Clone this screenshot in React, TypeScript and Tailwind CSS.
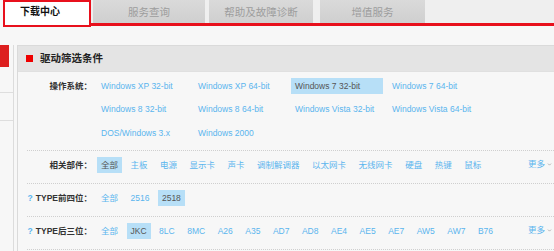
import { ChevronDown } from "lucide-react";

const osOptions = [
  "Windows XP 32-bit",
  "Windows XP 64-bit",
  "Windows 7 32-bit",
  "Windows 7 64-bit",
  "Windows 8 32-bit",
  "Windows 8 64-bit",
  "Windows Vista 32-bit",
  "Windows Vista 64-bit",
  "DOS/Windows 3.x",
  "Windows 2000",
];

const parts = ["全部", "主板", "电源", "显示卡", "声卡", "调制解调器", "以太网卡", "无线网卡", "硬盘", "热键", "鼠标"];
const prefixes = ["全部", "2516", "2518"];
const suffixes = ["全部", "JKC", "8LC", "8MC", "A26", "A35", "AD7", "AD8", "AE4", "AE5", "AE7", "AW5", "AW7", "B76"];

function Option({ label, active, wide }: { label: string; active?: boolean; wide?: boolean }) {
  return (
    <span
      className={`flex h-[16px] items-center whitespace-nowrap px-[4px] ${wide ? "w-[92px]" : ""} ${
        active ? "bg-[#b7dff7] text-[#555]" : "text-[#5ab5ee]"
      }`}
    >
      {label}
    </span>
  );
}

function More() {
  return (
    <span className="ml-auto mt-[3px] flex items-center gap-[2px] pr-[2px] text-[#5ab5ee]">
      更多
      <ChevronDown className="size-[5px] text-[#aaa]" strokeWidth={4} />
    </span>
  );
}

function FilterRow({
  label,
  hint,
  items,
  active,
  more,
}: {
  label: string;
  hint?: boolean;
  items: string[];
  active: string;
  more?: boolean;
}) {
  return (
    <div className="ml-[9px] flex items-start border-b border-dotted border-[#cfcfcf] pb-[10px] pt-[6px]">
      <div className="flex h-[16px] w-[70px] shrink-0 items-center justify-end whitespace-nowrap pr-[5px] font-bold text-[#333]">
        {hint && <span className="mr-[3px] text-[#5ab5ee]">?</span>}
        {label}
      </div>
      <div className="flex gap-[4.5px]">
        {items.map((item) => (
          <Option key={item} label={item} active={item === active} />
        ))}
      </div>
      {more && <More />}
    </div>
  );
}

export default function App() {
  return (
    <div
      className="h-[251px] w-[554px] overflow-hidden bg-[#f7f7f7] text-[8.5px] leading-none"
      style={{ fontFamily: '"Liberation Sans", "Noto Sans CJK SC", sans-serif' }}
    >
      {/* tabs */}
      <div className="flex pl-[3px]">
        <div className="flex h-[27px] w-[88px] shrink-0 items-center border-2 border-[#e8101c] bg-white pb-[3px] pl-[15px] text-[10px] font-bold text-[#111]">
          下载中心
        </div>
        <div className="flex flex-1 flex-col">
          <div className="flex h-[23px] bg-[#efefef] pl-[2px]">
            <div className="flex w-[112px] items-center justify-center bg-gradient-to-b from-[#dadada] to-[#cfcfcf] pt-[1px] text-[10.5px] text-[#9d9d9d]">
              服务查询
            </div>
            <div className="ml-[4px] flex w-[104px] items-center justify-center bg-gradient-to-b from-[#dadada] to-[#cfcfcf] pt-[1px] text-[10.5px] text-[#9d9d9d]">
              帮助及故障诊断
            </div>
            <div className="ml-[7px] flex w-[105px] items-center justify-center bg-gradient-to-b from-[#dadada] to-[#cfcfcf] pt-[1px] text-[10.5px] text-[#9d9d9d]">
              增值服务
            </div>
          </div>
          <div className="h-[3px] bg-[#e8101c]" />
        </div>
      </div>

      <div className="mt-[18px] flex">
        {/* side nav */}
        <div className="w-[14px] shrink-0 border-r border-[#dcdcdc]">
          <div className="h-[48px] border-b border-[#dedede]">
            <div className="h-[22px] w-[9px] bg-[#dd1f1f]" />
          </div>
          <div className="h-[28px] border-b border-[#dedede]" />
          <div className="h-[140px]" />
        </div>

        {/* filter panel */}
        <div className="ml-[3px] flex-1 border-l border-t border-[#dadada] bg-[#f7f7f7]">
          <div className="flex h-[26px] items-center border-b border-[#e0e0e0] bg-[#e4e4e4] pl-[8px]">
            <span className="h-[7px] w-[7px] bg-[#ee0000]" />
            <span className="ml-[7px] text-[10.5px] font-bold text-[#222]">驱动筛选条件</span>
          </div>

          <div className="ml-[9px] flex items-start border-b border-dotted border-[#cfcfcf] pb-[9px] pt-[6px]">
            <div className="flex h-[16px] w-[70px] shrink-0 items-center justify-end pr-[5px] font-bold text-[#333]">
              操作系统：
            </div>
            <div className="grid grid-cols-[97px_97px_97px_97px] gap-y-[7.5px]">
              {osOptions.map((os) => (
                <div key={os} className="flex">
                  <Option label={os} active={os === "Windows 7 32-bit"} wide={os === "Windows 7 32-bit"} />
                </div>
              ))}
            </div>
          </div>

          <FilterRow label="相关部件：" items={parts} active="全部" more />
          <FilterRow label="TYPE前四位：" hint items={prefixes} active="2518" />
          <FilterRow label="TYPE后三位：" hint items={suffixes} active="JKC" more />
        </div>
      </div>
    </div>
  );
}
